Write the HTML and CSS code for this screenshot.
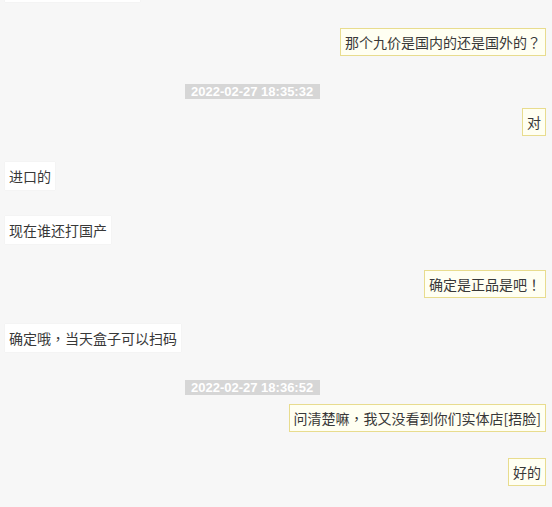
FILE: index.html
```html
<!DOCTYPE html>
<html lang="zh-CN">
<head>
<meta charset="utf-8">
<title>Chat</title>
<link rel="stylesheet" href="styles.css">
</head>
<body>
<div class="chat">
  <div class="msg left first"><div class="bubble blank"></div></div>
  <div class="msg right"><div class="bubble">那个九价是国内的还是国外的<span class="p" lang="zh-TW">？</span></div></div>
  <div class="time"><span>2022-02-27 18:35:32</span></div>
  <div class="msg right"><div class="bubble">对</div></div>
  <div class="msg left"><div class="bubble">进口的</div></div>
  <div class="msg left"><div class="bubble">现在谁还打国产</div></div>
  <div class="msg right"><div class="bubble">确定是正品是吧<span class="p" lang="zh-TW">！</span></div></div>
  <div class="msg left"><div class="bubble">确定哦<span class="p" lang="zh-TW">，</span>当天盒子可以扫码</div></div>
  <div class="time"><span>2022-02-27 18:36:52</span></div>
  <div class="msg right"><div class="bubble">问清楚嘛<span class="p" lang="zh-TW">，</span>我又没看到你们实体店[捂脸]</div></div>
  <div class="msg right"><div class="bubble">好的</div></div>
</div>
</body>
</html>
```
FILE: styles.css
```css
html, body {
  margin: 0;
  padding: 0;
  background: #f7f7f7;
  height: 100%;
  overflow: hidden;
}
.chat {
  display: flex;
  flex-direction: column;
  padding: 0 6px 0 5px;
  font-family: "Noto Sans CJK SC", "Microsoft YaHei", sans-serif;
  font-size: 14px;
  color: #383838;
}
.p {
  display: inline-block;
  width: 1em;
  text-align: center;
  font-family: "Noto Sans CJK TC", "Noto Sans CJK SC", sans-serif;
}
.msg {
  display: flex;
  margin-bottom: 26px;
}
.msg.first {
  margin-top: -26px;
}
.msg.right {
  justify-content: flex-end;
}
.bubble {
  box-sizing: border-box;
  height: 28px;
  padding: 0 4px;
  line-height: 28px;
  white-space: nowrap;
  background: #ffffff;
  box-shadow: 0 0 1px rgba(0, 0, 0, 0.08);
}
.bubble.blank {
  width: 135px;
}
.msg.right .bubble {
  background: #fffff2;
  border: 1px solid #e8dc8e;
  line-height: 26px;
  box-shadow: none;
}
.time {
  display: flex;
  margin: 2px 0 9px;
  padding-left: 180px;
}
.time span {
  height: 15px;
  line-height: 15px;
  padding: 0 7px 0 6px;
  background: #d6d6d6;
  color: #ffffff;
  font-family: "Liberation Sans", Arial, sans-serif;
  font-weight: bold;
  font-size: 13px;
}
```
